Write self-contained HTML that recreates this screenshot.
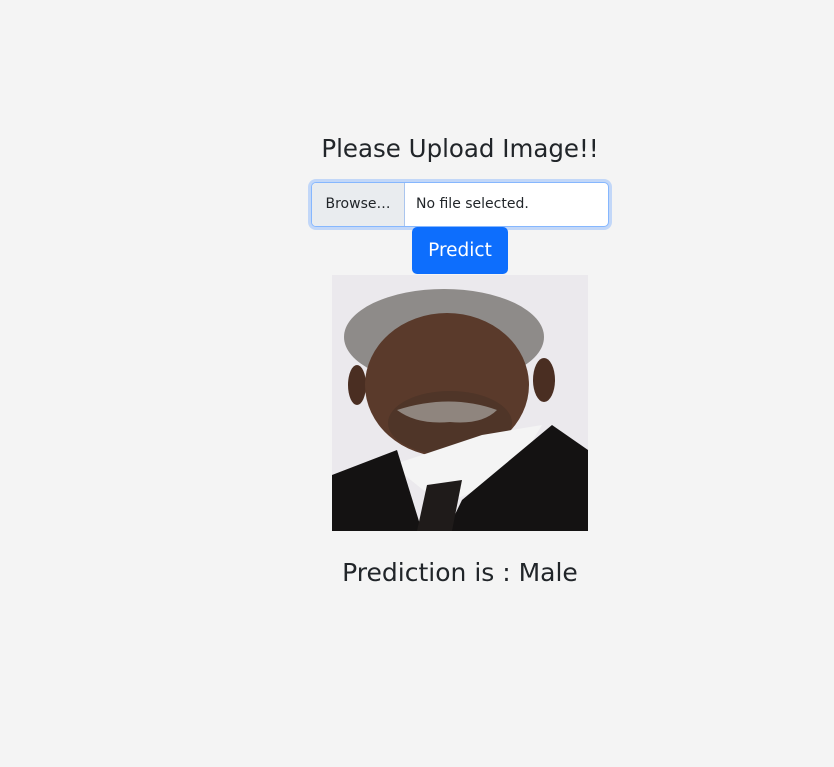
<!DOCTYPE html>
<html><head><style>
body{margin:0;background:#f4f4f4;font-family:"DejaVu Sans","Liberation Sans",sans-serif;color:#212529;width:834px;height:767px;position:relative;overflow:hidden}
.t{position:absolute;left:0;width:920px;text-align:center;font-size:24.5px;}
.inp{position:absolute;left:311px;top:182px;width:296px;height:43px;border:1px solid #86b7fe;border-radius:5px;box-shadow:0 0 0 3px #c2d7f8;background:#fff;overflow:hidden}
.br{position:absolute;left:0;top:0;width:92px;height:43px;background:#e9ecef;border-right:1px solid #aac5ee;font-size:14px;line-height:43px;text-align:center}
.nf{position:absolute;left:104px;top:0;line-height:43px;font-size:14px}
.btn{position:absolute;left:412px;top:227px;width:96px;height:47px;background:#0d6efd;border-radius:5px;color:#fff;font-size:18.5px;line-height:48px;text-align:center}
svg{position:absolute;left:332px;top:275px}
</style></head><body>
<div class="t" style="top:134px">Please Upload Image!!</div>
<div class="inp"><div class="br">Browse…</div><div class="nf">No file selected.</div></div>
<div class="btn">Predict</div>
<svg width="256" height="256" viewBox="0 0 256 256">
<rect width="256" height="256" fill="#ebe9ed"/>
<ellipse cx="112" cy="62" rx="100" ry="48" fill="#8e8b89"/>
<ellipse cx="25" cy="110" rx="9" ry="20" fill="#4a2e22"/>
<ellipse cx="212" cy="105" rx="11" ry="22" fill="#4a2e22"/>
<ellipse cx="115" cy="110" rx="82" ry="72" fill="#5a3a2b"/>
<ellipse cx="118" cy="148" rx="62" ry="32" fill="#4f3528"/>
<path d="M65 135 Q118 118 165 135 Q150 150 118 147 Q85 150 65 135Z" fill="#8f857e"/>
<path d="M60 190 L110 230 L180 200 L210 150 L150 160 Z" fill="#f4f4f4"/>
<path d="M0 200 L65 175 L90 256 L0 256Z" fill="#141212"/>
<path d="M256 175 L220 150 L130 225 L115 256 L256 256Z" fill="#141212"/>
<path d="M95 210 L130 205 L120 256 L85 256Z" fill="#1f1b1a"/>
</svg>
<div class="t" style="top:558px;font-size:25px">Prediction is : Male</div>
</body></html>
